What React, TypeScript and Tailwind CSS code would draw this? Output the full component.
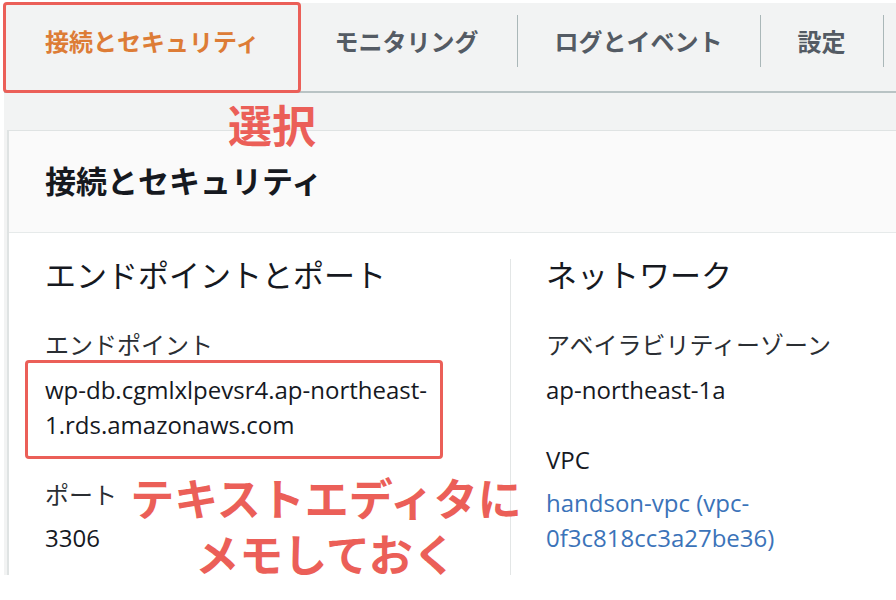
import React from "react";

const font = "font-['Open_Sans','Noto_Sans_CJK_JP',sans-serif]";

function Sep() {
  return <div className="w-px h-[52px] bg-[#aab7b8] self-start mt-[12px]" />;
}

export default function App() {
  return (
    <div className={`relative w-[896px] h-[600px] bg-white overflow-hidden ${font}`}>
      <div className="ml-[4px] mt-[3px] h-[572px] bg-[#f2f3f3] overflow-hidden flex flex-col">
        {/* Tabs */}
        <div className="h-[90px] shrink-0 flex items-stretch border-b-2 border-[#b9c3c4]">
          <div className="flex items-center pb-[11px] pl-[41px] pr-[37px] text-[24px] font-bold text-[#dd7c36] leading-none">
            接続とセキュリティ
          </div>
          <div className="flex items-center pb-[11px] px-[38px] text-[24px] font-bold text-[#545b64] leading-none">
            モニタリング
          </div>
          <Sep />
          <div className="flex items-center pb-[11px] px-[37px] text-[24px] font-bold text-[#545b64] leading-none">
            ログとイベント
          </div>
          <Sep />
          <div className="flex items-center pb-[11px] px-[37px] text-[24px] font-bold text-[#545b64] leading-none">
            設定
          </div>
          <Sep />
        </div>
        {/* Panel */}
        <div className="mt-[37px] ml-[3px] flex-1 bg-white border-l-2 border-t border-[#dfe3e3] flex flex-col">
          <div className="h-[102px] shrink-0 bg-[#fafafa] border-b border-[#e6eaea] flex items-center pl-[36px] text-[31px] font-bold text-[#16191f]">
            接続とセキュリティ
          </div>
          <div className="flex flex-1 pt-[26px]">
            <div className="w-[502px] shrink-0 pl-[36px] border-r border-[#e3e6e6]">
              <div className="text-[31px] leading-[32px] text-[#16191f]">エンドポイントとポート</div>
              <div className="mt-[36px] text-[24px] leading-[35px] text-[#2a2e33]">エンドポイント</div>
              <div className="mt-[10px] text-[24px] leading-[35px] text-[#16191f]">
                wp-db.cgmlxlpevsr4.ap-northeast-
                <br />
                1.rds.amazonaws.com
              </div>
              <div className="mt-[35px] text-[24px] leading-[35px] text-[#2a2e33]">ポート</div>
              <div className="mt-[8px] text-[24px] leading-[35px] text-[#16191f]">3306</div>
            </div>
            <div className="flex-1 pl-[35px]">
              <div className="text-[31px] leading-[32px] text-[#16191f]">ネットワーク</div>
              <div className="mt-[36px] text-[24px] leading-[35px] text-[#2a2e33]">アベイラビリティーゾーン</div>
              <div className="mt-[10px] text-[24px] leading-[35px] text-[#16191f]">ap-northeast-1a</div>
              <div className="mt-[35px] text-[24px] leading-[35px] text-[#16191f]">VPC</div>
              <div className="mt-[8px] text-[24px] leading-[35px] text-[#3b73b9]">
                handson-vpc (vpc-
                <br />
                0f3c818cc3a27be36)
              </div>
            </div>
          </div>
        </div>
      </div>

      {/* Annotations */}
      <div className="absolute left-[3px] top-[2px] w-[298px] h-[91px] border-[3px] border-[#eb5f58] rounded-[4px]" />
      <div className="absolute left-[228px] top-[100px] text-[44px] leading-[52px] font-bold text-[#eb5f58]">選択</div>
      <div className="absolute left-[25px] top-[360px] w-[418px] h-[99px] border-[3px] border-[#eb5f58] rounded-[4px]" />
      <div className="absolute left-[128px] top-[471px] text-[44px] leading-[56px] font-bold text-[#eb5f58] text-center w-[396px]">
        テキストエディタに
        <br />
        メモしておく
      </div>
    </div>
  );
}
